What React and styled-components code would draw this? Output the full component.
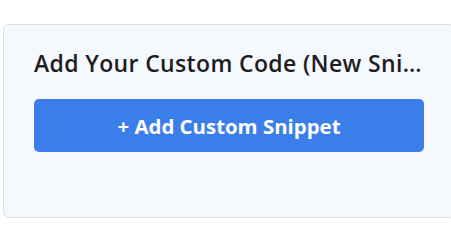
import React from 'react'
import styled, { createGlobalStyle } from 'styled-components'

const GlobalStyle = createGlobalStyle`
  body {
    margin: 0;
    background: #ffffff;
    font-family: "Open Sans", "Noto Sans", sans-serif;
  }
`

const Page = styled.div`
  padding: 24px 0 0 3px;
  overflow: hidden;
  width: 451px;
  box-sizing: border-box;
`

const Card = styled.section`
  box-sizing: border-box;
  width: 452px;
  height: 194px;
  padding: 23px 30px;
  background: #f5f8fd;
  border: 1px solid #dcdfe4;
  border-radius: 6px;
  display: flex;
  flex-direction: column;
  gap: 20px;
`

const Title = styled.h3`
  margin: 0;
  font-size: 23px;
  font-weight: 600;
  letter-spacing: 0.35px;
  line-height: 31px;
  color: #1d1d1f;
  white-space: nowrap;
  overflow: hidden;
  text-overflow: ellipsis;
`

const AddButton = styled.button`
  height: 53px;
  width: 100%;
  border: none;
  border-radius: 5px;
  background: #3b7ee9;
  color: #ffffff;
  font-family: inherit;
  font-size: 20.4px;
  font-weight: 700;
  cursor: pointer;
`

const App = () => (
  <>
    <GlobalStyle />
    <Page>
      <Card>
        <Title>Add Your Custom Code (New Snippet)</Title>
        <AddButton>+ Add Custom Snippet</AddButton>
      </Card>
    </Page>
  </>
)

export default App
